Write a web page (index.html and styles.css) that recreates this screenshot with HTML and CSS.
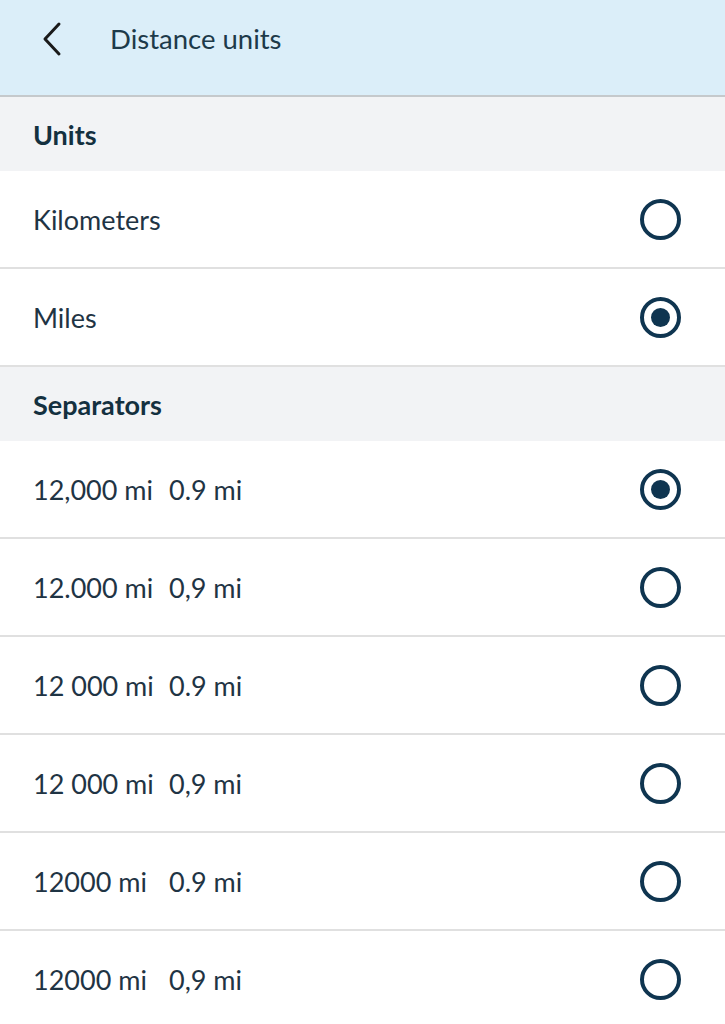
FILE: index.html
```html
<!DOCTYPE html>
<html>
<head>
<meta charset="utf-8">
<link rel="stylesheet" href="styles.css">
</head>
<body>
<header class="topbar">
  <svg class="back" width="24" height="36" viewBox="0 0 24 36"><path d="M19 3 L5 18 L19 33" fill="none" stroke="#1a1a1a" stroke-width="3" stroke-linecap="round" stroke-linejoin="round"/></svg>
  <h1 class="title">Distance units</h1>
</header>
<section>
  <div class="section-head">Units</div>
  <div class="row"><span class="label">Kilometers</span><span class="radio"></span></div>
  <div class="row"><span class="label">Miles</span><span class="radio on"></span></div>
</section>
<section>
  <div class="section-head">Separators</div>
  <div class="row"><span class="label"><span class="a">12,000 mi</span><span class="b">0.9 mi</span></span><span class="radio on"></span></div>
  <div class="row"><span class="label"><span class="a">12.000 mi</span><span class="b">0,9 mi</span></span><span class="radio"></span></div>
  <div class="row"><span class="label"><span class="a">12 000 mi</span><span class="b">0.9 mi</span></span><span class="radio"></span></div>
  <div class="row"><span class="label"><span class="a">12 000 mi</span><span class="b">0,9 mi</span></span><span class="radio"></span></div>
  <div class="row"><span class="label"><span class="a">12000 mi</span><span class="b">0.9 mi</span></span><span class="radio"></span></div>
  <div class="row"><span class="label"><span class="a">12000 mi</span><span class="b">0,9 mi</span></span><span class="radio"></span></div>
</section>
</body>
</html>
```
FILE: styles.css
```css
* { box-sizing: border-box; }
body {
  margin: 0;
  background: #ffffff;
  font-family: Lato, "Open Sans", sans-serif;
  color: #1f3444;
}
.topbar {
  height: 97px;
  background: #dbeef9;
  border-bottom: 2px solid #c5c9cc;
  display: flex;
  align-items: flex-start;
  padding: 21px 0 0 40px;
}
.back { display: block; margin-right: 46px; }
.title {
  margin: 0;
  font-size: 27.5px;
  line-height: 36px;
  font-weight: 400;
  color: #1d3a4a;
}
.section-head {
  height: 74px;
  background: #f2f3f5;
  display: flex;
  align-items: center;
  padding-left: 33px;
  font-size: 27px;
  font-weight: 700;
  color: #14303f;
}
.row {
  height: 98px;
  display: flex;
  align-items: center;
  justify-content: space-between;
  padding: 0 44px 0 33px;
  border-bottom: 2px solid #e0e0e0;
  font-size: 27px;
}
.label { display: flex; white-space: nowrap; }
.a { min-width: 136px; }
.radio {
  width: 41px;
  height: 41px;
  border: 4px solid #0f3550;
  border-radius: 50%;
  display: flex;
  align-items: center;
  justify-content: center;
}
.radio.on::after {
  content: "";
  width: 19px;
  height: 19px;
  border-radius: 50%;
  background: #0f3550;
}
```
